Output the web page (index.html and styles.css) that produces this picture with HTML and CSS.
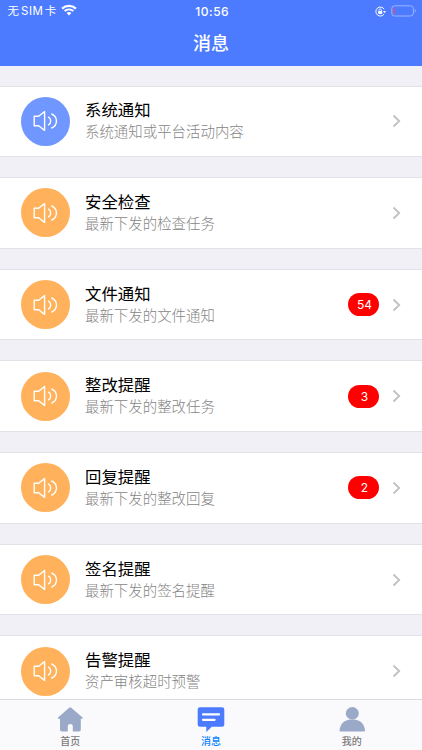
FILE: index.html
```
<!DOCTYPE html>
<html lang="zh-CN">
<head>
    <meta charset="UTF-8">
    <meta name="viewport" content="width=device-width, initial-scale=1.0">
    <title>消息</title>
    <link rel="stylesheet" href="styles.css">
</head>
<body>

<svg class="symbols" width="0" height="0">
    <symbol id="speaker" viewBox="0 0 26 22">
        <path d="M2.2 6.3H6.6L12.6 1.6V20.4L6.6 15.7H2.2Z"/>
        <path d="M16.5 7.2C19.4 8.8 19.4 13.2 16.5 14.8"/>
        <path d="M19.8 4C26 7 26 15 19.8 18"/>
    </symbol>
    <symbol id="arrow" viewBox="0 0 9 14">
        <path d="M1.5 1.5L7.2 7L1.5 12.5"/>
    </symbol>
</svg>

<header class="header">
    <div class="status-bar">
        <div class="status-left">
            <span class="carrier">无<span class="sim">SIM</span>卡</span>
            <svg class="wifi" width="16" height="12" viewBox="0 0 16 12">
                <path d="M1.1 4.6C5 .9 11 .9 14.9 4.6" fill="none" stroke="#fff" stroke-width="2.2"/>
                <path d="M3.6 7.1C6.2 4.8 9.8 4.8 12.4 7.1" fill="none" stroke="#fff" stroke-width="2"/>
                <path d="M5.6 8.9C7 7.7 9 7.7 10.4 8.9L8 11.4Z" fill="#fff"/>
            </svg>
        </div>
        <div class="time">10:56</div>
        <div class="status-right">
            <svg width="11" height="11" viewBox="0 0 11 11">
                <path d="M9.2 3.2A4.5 4.5 0 1 0 9 8.2" fill="none" stroke="#fff" stroke-width="1"/>
                <path d="M8 5H11L9.5 7.2Z" fill="#fff"/>
                <rect x="3.2" y="4.9" width="4" height="3" rx=".4" fill="#fff"/>
                <path d="M4 5V4.1A1.2 1.2 0 0 1 6.4 4.1V5" fill="none" stroke="#fff" stroke-width=".8"/>
            </svg>
            <svg width="26" height="12" viewBox="0 0 26 12">
                <rect x=".8" y=".8" width="21.6" height="10.2" rx="2.8" fill="none" stroke="#9ab5ff" stroke-width="1"/>
                <path d="M4 2.4V9.4H3.2C2.5 9.4 2.2 8.9 2.2 8.3V3.5C2.2 2.9 2.5 2.4 3.2 2.4Z" fill="#b75b9b"/>
                <path d="M23.8 4.1C25.2 4.7 25.2 7.1 23.8 7.7Z" fill="#9ab5ff"/>
            </svg>
        </div>
    </div>
    <h1 class="title">消息</h1>
</header>

<main class="list">
    <div class="item">
        <div class="icon blue"><svg><use href="#speaker"/></svg></div>
        <div class="text"><h2>系统通知</h2><p>系统通知或平台活动内容</p></div>
        <svg class="arrow"><use href="#arrow"/></svg>
    </div>
    <div class="item">
        <div class="icon"><svg><use href="#speaker"/></svg></div>
        <div class="text"><h2>安全检查</h2><p>最新下发的检查任务</p></div>
        <svg class="arrow"><use href="#arrow"/></svg>
    </div>
    <div class="item">
        <div class="icon"><svg><use href="#speaker"/></svg></div>
        <div class="text"><h2>文件通知</h2><p>最新下发的文件通知</p></div>
        <span class="badge">54</span>
        <svg class="arrow"><use href="#arrow"/></svg>
    </div>
    <div class="item">
        <div class="icon"><svg><use href="#speaker"/></svg></div>
        <div class="text"><h2>整改提醒</h2><p>最新下发的整改任务</p></div>
        <span class="badge">3</span>
        <svg class="arrow"><use href="#arrow"/></svg>
    </div>
    <div class="item">
        <div class="icon"><svg><use href="#speaker"/></svg></div>
        <div class="text"><h2>回复提醒</h2><p>最新下发的整改回复</p></div>
        <span class="badge">2</span>
        <svg class="arrow"><use href="#arrow"/></svg>
    </div>
    <div class="item">
        <div class="icon"><svg><use href="#speaker"/></svg></div>
        <div class="text"><h2>签名提醒</h2><p>最新下发的签名提醒</p></div>
        <svg class="arrow"><use href="#arrow"/></svg>
    </div>
    <div class="item">
        <div class="icon"><svg><use href="#speaker"/></svg></div>
        <div class="text"><h2>告警提醒</h2><p>资产审核超时预警</p></div>
        <svg class="arrow"><use href="#arrow"/></svg>
    </div>
</main>

<nav class="tabbar">
    <a class="tab">
        <svg width="28" height="26" viewBox="0 0 28 26">
            <path d="M13.2 .7Q14.2 0 15.2 .7L26.6 10.5Q27.4 11.6 26 11.8H24.8V22.5Q24.8 24.5 22.8 24.5H16.8V19Q16.8 17 14.3 17T11.8 19V24.5H6Q4 24.5 4 22.5V11.8H2.6Q1.1 11.6 2 10.5Z" fill="#9aa9c7"/>
        </svg>
        <span>首页</span>
    </a>
    <a class="tab active">
        <svg width="28" height="26" viewBox="0 0 28 26">
            <path d="M3 .2H25Q27.3 .2 27.3 2.5V17.5Q27.3 19.8 25 19.8H14.8L9.3 25V19.8H3Q.7 19.8 .7 17.5V2.5Q.7 .2 3 .2Z" fill="#4c7bff"/>
            <path d="M6 7.4H22M6 12.8H17.6" stroke="#fff" stroke-width="2.2" stroke-linecap="round"/>
        </svg>
        <span>消息</span>
    </a>
    <a class="tab">
        <svg width="28" height="26" viewBox="0 0 28 26">
            <ellipse cx="14.3" cy="6.3" rx="6.5" ry="6.2" fill="#9aa9c7"/>
            <path d="M1.5 23.5C2 17 6.5 13.3 11.5 12.5H17C22 13.3 26.5 17 27 23.5Q27 24.5 26 24.5H2.5Q1.5 24.5 1.5 23.5Z" fill="#9aa9c7"/>
        </svg>
        <span>我的</span>
    </a>
</nav>

</body>
</html>
```
FILE: styles.css
```
* {
    box-sizing: border-box;
}
body {
    margin: 0;
    height: 750px;
    display: flex;
    flex-direction: column;
    overflow: hidden;
    background-color: #f1f0f7;
    font-family: Inter, "Noto Sans CJK SC", sans-serif;
}
h1, h2, p {
    margin: 0;
    font-weight: 400;
}
.symbols {
    position: absolute;
}
.header {
    flex: none;
    height: 65.5px;
    background-color: #4c7bff;
    color: #fff;
}
.status-bar {
    display: grid;
    grid-template-columns: 1fr auto 1fr;
    align-items: center;
    height: 22px;
    padding: 0 5px 0 7.5px;
    font-size: 11.5px;
}
.status-left, .status-right {
    display: flex;
    align-items: center;
    gap: 5px;
}
.status-right {
    justify-content: flex-end;
}
.carrier {
    line-height: 22px;
    white-space: nowrap;
}
.sim {
    margin: 0 1.5px 0 2px;
    letter-spacing: 0.5px;
}
.wifi {
    margin-top: -2px;
}
.time {
    font-size: 12px;
    font-weight: 500;
    letter-spacing: 0.5px;
}
.title {
    height: 43px;
    font-size: 18px;
    font-weight: 500;
    line-height: 43px;
    text-align: center;
}
.list {
    flex: 1;
    min-height: 0;
    overflow: hidden;
    padding-top: 20px;
}
.item {
    display: flex;
    align-items: center;
    height: 71.67px;
    margin-bottom: 20px;
    padding: 0 21px 0 20.5px;
    border-top: 1px solid #e2e1e7;
    border-bottom: 1px solid #e2e1e7;
    background-color: #fff;
}
.icon {
    display: flex;
    align-items: center;
    justify-content: center;
    width: 49px;
    height: 49px;
    border-radius: 50%;
    background-color: #ffb25b;
}
.icon.blue {
    background-color: #7096ff;
}
.icon svg {
    width: 26px;
    height: 22px;
    fill: none;
    stroke: #fff;
    stroke-width: 1.4;
    stroke-linejoin: round;
    stroke-linecap: round;
}
.text {
    flex: 1;
    margin-top: -1px;
    margin-left: 15.5px;
}
.text h2 {
    font-size: 16.4px;
    line-height: 22px;
    color: #000;
}
.text p {
    font-size: 14.45px;
    font-weight: 300;
    line-height: 21px;
    color: #858585;
}
.badge {
    width: 31px;
    height: 23px;
    margin-right: 13.5px;
    padding-left: 3px;
    border-radius: 11.5px;
    background-color: #f00;
    color: #fff;
    font-size: 12px;
    line-height: 23px;
    text-align: center;
}
.arrow {
    width: 9px;
    height: 14px;
    fill: none;
    stroke: #c1c1c4;
    stroke-width: 1.8;
}
.tabbar {
    flex: none;
    display: flex;
    height: 51px;
    border-top: 1px solid #dcdce0;
    background-color: #fafafc;
}
.tab {
    flex: 1;
    display: flex;
    flex-direction: column;
    align-items: center;
    padding-top: 7px;
    color: #7b7b7b;
    font-size: 10px;
    font-weight: 500;
    line-height: 17px;
}
.tab svg {
    flex: none;
}
.tab.active {
    color: #0a84ff;
}
```
